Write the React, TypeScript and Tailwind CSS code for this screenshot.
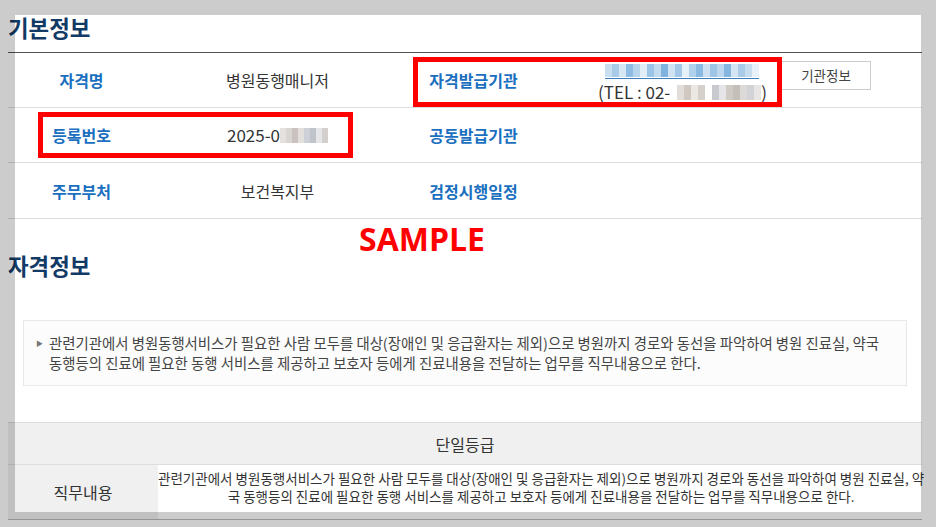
import React from "react";

const FONT = '"Noto Sans CJK KR", "Noto Sans", sans-serif';

function Blur({ colors, h = 13, w = 7 }: { colors: string[]; h?: number; w?: number }) {
  return (
    <span className="inline-flex align-middle">
      {colors.map((c, i) => (
        <span key={i} className="inline-block" style={{ backgroundColor: c, width: w, height: h }} />
      ))}
    </span>
  );
}

const linkColors = ["#c9dff0", "#a9cbe8", "#d7e7f4", "#8fbce2", "#b6d4ec", "#e1edf7", "#9cc4e6", "#c2dbef", "#7fb2de", "#d0e3f3", "#a3c8e7", "#e6f0f8", "#b0d1eb", "#8ab9e1", "#cde1f2", "#9fc5e6", "#bcd7ee", "#85b6df", "#d4e6f4", "#aacbe8", "#c6ddf0", "#e8f1f9"];
const telColors = ["#ffffff", "#e2ddd8", "#cfc7c0", "#ebe7e3", "#d6d0cb", "#ffffff", "#c8c9cf", "#e5e5e8", "#d0cac4", "#c5bfba", "#dcdad8", "#d2d3d6", "#e8e6e4"];
const regColors = ["#e4e1df", "#d9d5d3", "#c9c2be", "#e3dfdd", "#cdd0d6", "#bfc3ca", "#e6e6e8", "#d3cfcc"];

function Label({ children }: { children: React.ReactNode }) {
  return <div className="flex items-center justify-center text-[16px] font-bold text-[#1a6fbf]">{children}</div>;
}
function Value({ children }: { children: React.ReactNode }) {
  return <div className="flex items-center justify-center text-[16px] text-[#333]">{children}</div>;
}

export default function App() {
  return (
    <div className="relative w-[936px] h-[527px] overflow-hidden bg-white" style={{ fontFamily: FONT }}>
      <div className="w-[914px] ml-[8px]">
        <div className="h-[52px] pt-[12px] text-[22.4px] leading-[30px] font-bold text-[#123a66]">기본정보</div>
        <div className="border-t border-[#555]">
          <div className="grid grid-cols-[147px_245px_147px_1fr] h-[55px] border-b border-[#ddd]">
            <Label>자격명</Label>
            <Value>병원동행매니저</Value>
            <Label>자격발급기관</Label>
            <div className="flex items-start justify-center gap-[14px]">
              <div className="flex flex-col items-center pt-[11px]">
                <div className="h-[15px] border-b border-[#3a7ec0] flex items-start">
                  <Blur colors={linkColors} h={13} />
                </div>
                <div className="mt-[2px] text-[17px] leading-[22px] text-[#333] flex items-center whitespace-nowrap">
                  (TEL : 02-<Blur colors={telColors} h={15} w={7} /> )
                </div>
              </div>
              <div className="mt-[8px] w-[90px] h-[29px] border border-[#ccc] flex items-center justify-center text-[13.5px] text-[#444]">기관정보</div>
            </div>
          </div>
          <div className="grid grid-cols-[147px_245px_147px_1fr] h-[55px] border-b border-[#ddd]">
            <Label>등록번호</Label>
            <Value>
              <span className="flex items-center text-[17px]">2025-0<Blur colors={regColors} h={15} w={6} /></span>
            </Value>
            <Label>공동발급기관</Label>
            <div />
          </div>
          <div className="grid grid-cols-[147px_245px_147px_1fr] h-[56px] border-b border-[#ddd]">
            <Label>주무부처</Label>
            <Value>보건복지부</Value>
            <Label>검정시행일정</Label>
            <div />
          </div>
        </div>

        <div className="mt-[31px] text-[22.4px] leading-[30px] font-bold text-[#123a66]">자격정보</div>

        <div className="mt-[40px] mx-[15px] border border-[#e8e8e8] bg-[#fcfcfc] py-[12px] pl-[12px] flex text-[14.4px] leading-[20px] text-[#444]">
          <span className="w-[13px] flex-none text-[7px] leading-[20px] text-[#777]">▶</span>
          <span className="whitespace-nowrap">
            관련기관에서 병원동행서비스가 필요한 사람 모두를 대상(장애인 및 응급환자는 제외)으로 병원까지 경로와 동선을 파악하여 병원 진료실, 약국
            <br />
            동행등의 진료에 필요한 동행 서비스를 제공하고 보호자 등에게 진료내용을 전달하는 업무를 직무내용으로 한다.
          </span>
        </div>

        <div className="mt-[36px] border-t border-[#ddd] border-b border-b-[#bbb]">
          <div className="h-[42px] bg-[#f0f0f0] border-b border-[#ddd] flex items-center justify-center text-[16px] text-[#333]">단일등급</div>
          <div className="grid grid-cols-[150px_1fr] h-[54px]">
            <div className="bg-[#f0f0f0] flex items-center justify-center text-[16px] text-[#333]">직무내용</div>
            <div className="flex items-center justify-center overflow-visible">
              <div className="whitespace-nowrap text-center text-[13.5px] leading-[18px] text-[#333] -mt-[10px]">
                관련기관에서 병원동행서비스가 필요한 사람 모두를 대상(장애인 및 응급환자는 제외)으로 병원까지 경로와 동선을 파악하여 병원 진료실, 약
                <br />
                국 동행등의 진료에 필요한 동행 서비스를 제공하고 보호자 등에게 진료내용을 전달하는 업무를 직무내용으로 한다.
              </div>
            </div>
          </div>
        </div>
      </div>

      {/* annotation overlays */}
      <div className="absolute left-[413px] top-[57px] w-[369px] h-[50px] border-[5px] border-[#ff0000]" />
      <div className="absolute left-[38px] top-[112px] w-[315px] h-[46px] border-[5px] border-[#ff0000]" />
      <div className="absolute left-[359px] top-[219px] text-[32px] leading-[40px] font-bold text-[#ff0000]" style={{ fontFamily: '"Open Sans", sans-serif' }}>SAMPLE</div>

      {/* dimmed frame */}
      <div className="absolute left-0 top-0 w-[936px] h-[15px] bg-black/20" />
      <div className="absolute left-0 top-[15px] w-[15px] h-[512px] bg-black/20" />
      <div className="absolute left-[921px] top-[15px] w-[15px] h-[512px] bg-black/20" />
      <div className="absolute left-[15px] top-[512px] w-[906px] h-[15px] bg-black/20" />
    </div>
  );
}
